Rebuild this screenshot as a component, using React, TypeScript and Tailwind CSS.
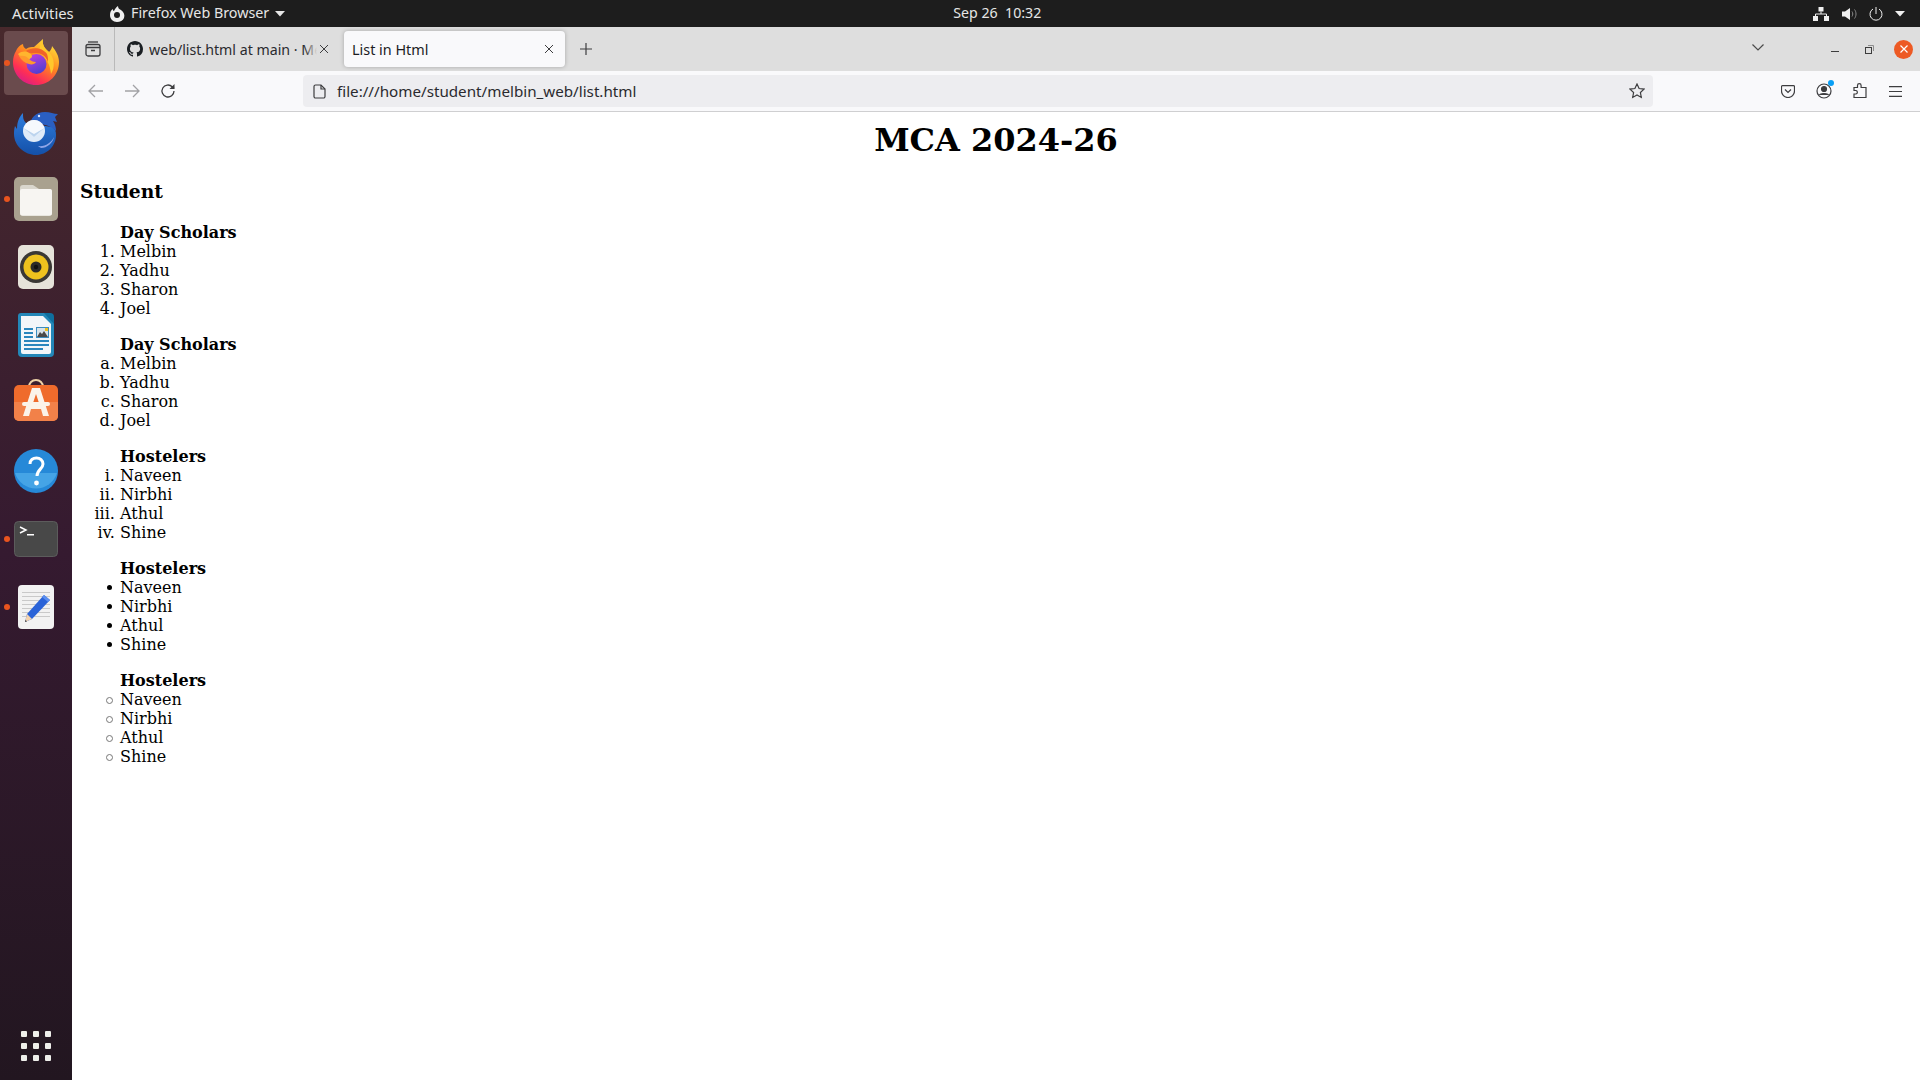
import React from "react";

const UI = { fontFamily: '"Noto Sans", "Open Sans", sans-serif' };
const SERIF = { fontFamily: '"DejaVu Serif", serif' };

function Firefox() {
  return (
    <svg className="mb-[2px]" width="48" height="48" viewBox="0 0 48 48">
      <defs>
        <linearGradient id="ffa" x1="0.8" y1="0.05" x2="0.2" y2="1">
          <stop offset="0" stopColor="#ffe03a" />
          <stop offset="0.4" stopColor="#ff8a1f" />
          <stop offset="0.75" stopColor="#ff2f54" />
          <stop offset="1" stopColor="#d31a8f" />
        </linearGradient>
        <linearGradient id="ffb" x1="0.3" y1="0" x2="0.7" y2="1">
          <stop offset="0" stopColor="#b83ee0" />
          <stop offset="1" stopColor="#4a3fd0" />
        </linearGradient>
      </defs>
      <path d="M31 1c-1 5 1 9 6 13 2-2 3-4 3-6 4 5 7 10 7 16 0 13-10 23-23 23S1 37 1 24c0-4 1-8 3-11 1-3 4-6 7-7 0 2 1 4 3 5 3-2 5-2 8-2 3-3 6-5 9-8z" fill="url(#ffa)" />
      <path d="M31 1c-1 5 1 9 6 13 6 6 6 16 2 22-1-9-4-15-9-19-4-4-2-11 1-16z" fill="#ffc72c" />
      <path d="M14 13c6-4 16-4 21 3 1 3 1 5 1 8-2-6-7-9-12-9-4 0-7 1-10-2z" fill="#f0632a" />
      <circle cx="24.500" cy="26" r="10" fill="url(#ffb)" />
      <path d="M6 16c4-3 8-3 11-1 3 1 4 4 2 5-1 1-2 1-2 2-3-1-5-1-7-3-1 0-3-1-4-3z" fill="#ffb52e" />
      <path d="M7 18c4-1 8 0 10 3 2 2 4 3 7 3-1 2-4 3-7 2-4-1-8-4-10-8z" fill="#ff9a2c" />
    </svg>
  );
}

function Thunderbird() {
  return (
    <svg width="48" height="48" viewBox="0 0 48 48">
      <defs>
        <linearGradient id="tb" x1="0.5" y1="0" x2="0.5" y2="1">
          <stop offset="0" stopColor="#2f7ede" />
          <stop offset="1" stopColor="#1450a8" />
        </linearGradient>
      </defs>
      <path d="M11 6c0 4 0 7 3 10l6 1 20 3c3 2 4 4 4 8 0 11-9 20-20 20S2 39 2 27c0-2 0-5 1-8l2 3c0-7 2-12 6-16z" fill="url(#tb)" />
      <path d="M18 19c0-8 6-14 15-14 5 0 9 2 13 2l-3 3 2 5-4-1c2 3 3 6 3 10-6-6-16-9-26-5z" fill="#2a5fc2" />
      <path d="M26 39c7 1 13-3 16-9-1 6-7 11-13 11z" fill="#8fa6e8" />
      <circle cx="22" cy="24" r="11" fill="#dfebf8" />
      <path d="M11.500 21l10.500 9 10.500-9c-2-5-6-8-10.500-8s-8.500 3-10.500 8z" fill="#f6f9fd" />
      <path d="M11.500 21l10.500 9 10.500-9-10.500 6z" fill="#bcd4ee" />
      <circle cx="27" cy="9" r="1.200" fill="#dce8ff" />
    </svg>
  );
}

function Files() {
  return (
    <svg width="44" height="44" viewBox="0 0 44 44">
      <rect width="44" height="44" rx="5" fill="#a9a18f" />
      <path d="M6 11a3 3 0 013-3h10l6 4h10a3 3 0 013 3v21a3 3 0 01-3 3H9a3 3 0 01-3-3z" fill="#d9d6cd" />
      <path d="M6 14a2 2 0 012-2h28a2 2 0 012 2v22a2.500 2.500 0 01-2.500 2.500H8.500A2.500 2.500 0 016 36z" fill="#f7f5f2" />
    </svg>
  );
}

function Rhythmbox() {
  return (
    <svg width="38" height="46" viewBox="0 0 38 46">
      <rect x="1" y="1" width="36" height="44" rx="5" fill="#e6e3da" />
      <circle cx="19" cy="23" r="16" fill="#3a3835" />
      <circle cx="19" cy="23" r="12.500" fill="#eec21e" />
      <circle cx="19" cy="23" r="5.500" fill="#2c2b28" />
      <circle cx="19" cy="23" r="2.200" fill="#111" />
    </svg>
  );
}

function Writer() {
  return (
    <svg width="38" height="46" viewBox="0 0 38 46">
      <path d="M4 1h24l9 9v31a4 4 0 01-4 4H5a4 4 0 01-4-4V4a3 3 0 013-3z" fill="#2387b8" />
      <path d="M4 4h22l8 8v28a2 2 0 01-2 2H6a2 2 0 01-2-2z" fill="#f2f6f9" />
      <path d="M27 1h6a4 4 0 014 4v7z" fill="#0f6f9e" />
      <rect x="7" y="16" width="9" height="2" fill="#2a86bd" />
      <rect x="7" y="20" width="9" height="2" fill="#2a86bd" />
      <rect x="7" y="24" width="9" height="2" fill="#2a86bd" />
      <rect x="7" y="28" width="25" height="2" fill="#2a86bd" />
      <rect x="7" y="32" width="25" height="2" fill="#2a86bd" />
      <rect x="7" y="36" width="19" height="2" fill="#2a86bd" />
      <rect x="19" y="15" width="13" height="11" fill="#3b8dbf" />
      <rect x="20" y="16" width="11" height="9" fill="#d8e4ea" />
      <path d="M20 25l3-5 2 2 2-3 4 6z" fill="#4a4a4a" />
      <rect x="28" y="16" width="3" height="3" fill="#f2c21e" />
    </svg>
  );
}

function Software() {
  return (
    <svg className="mb-[6px]" width="44" height="42" viewBox="0 0 44 42">
      <path d="M15 8c0-4 3-7 7-7s7 3 7 7" fill="none" stroke="#eed3a8" strokeWidth="2" />
      <rect y="6" width="44" height="36" rx="5" fill="#ef6b2c" />
      <path d="M0 23h44v14a5 5 0 01-5 5H5a5 5 0 01-5-5z" fill="#f28149" />
      <path d="M18 9h8l9 28h-6l-2-7H17l-2 7H9z" fill="#fbf3ea" />
      <path d="M22 15l-3 9h6z" fill="#ef6b2c" />
      <rect x="8" y="23" width="28" height="4" rx="2" fill="#fbf3ea" />
    </svg>
  );
}

function Help() {
  return (
    <svg width="44" height="44" viewBox="0 0 44 44">
      <circle cx="22" cy="22" r="22" fill="#2689d8" />
      <path d="M1 24h42a22 22 0 01-42 0z" fill="#45a4e6" />
      <path d="M16 15c0-4 3-6 6.500-6s6.500 2.500 6.500 6c0 5-6 5.500-6 12" fill="none" stroke="#fff" strokeWidth="3" />
      <circle cx="22.500" cy="34" r="2.400" fill="#fff" />
    </svg>
  );
}

function Terminal() {
  return (
    <svg width="44" height="36" viewBox="0 0 44 36">
      <rect x=".5" y=".5" width="43" height="35" rx="4" fill="#484848" stroke="#5c5c5c" />
      <path d="M6 6l6 3-6 3" fill="none" stroke="#fff" strokeWidth="1.500" />
      <rect x="13" y="13" width="7" height="1.500" fill="#fff" />
    </svg>
  );
}

function Editor() {
  return (
    <svg width="38" height="46" viewBox="0 0 38 46">
      <rect x="1" y="1" width="36" height="44" rx="4" fill="#f2f2f2" />
      {[8, 12, 16, 20, 24, 28, 32].map((y) => (
        <rect key={y} x="5" y={y} width="28" height="1" fill="#c9c9c9" />
      ))}
      <path d="M10 30L27 11l6 5-18 19-7 3z" fill="#2a63d8" />
      <path d="M27 11l6 5-2 2-6-5z" fill="#5b8ff0" />
      <path d="M10 30l5 5-7 3z" fill="#f3d3b0" />
      <path d="M8.500 36l-.5 2 2-.8z" fill="#333" />
    </svg>
  );
}

function DockItem({ running, active, children }: { running?: boolean; active?: boolean; children: React.ReactNode }) {
  return (
    <div className="relative flex h-[68px] items-center justify-center">
      {active && <div className="absolute left-[4px] top-[2px] h-[64px] w-[64px] rounded-[4px] bg-[#6a4b4d]" />}
      {running && <div className="absolute left-[4px] top-[31px] h-[6px] w-[6px] rounded-full bg-[#e9541f]" />}
      <div className="relative flex">{children}</div>
    </div>
  );
}

function Dock() {
  return (
    <div className="flex w-[72px] shrink-0 flex-col bg-linear-to-b from-[#48292c] via-[#351a30] to-[#221620] pt-[2px]">
      <DockItem running active><Firefox /></DockItem>
      <DockItem><Thunderbird /></DockItem>
      <DockItem running><Files /></DockItem>
      <DockItem><Rhythmbox /></DockItem>
      <DockItem><Writer /></DockItem>
      <DockItem><Software /></DockItem>
      <DockItem><Help /></DockItem>
      <DockItem running><Terminal /></DockItem>
      <DockItem running><Editor /></DockItem>
      <div className="mt-auto mb-[19px] grid w-[30px] grid-cols-3 gap-[6px] self-center">
        {Array.from({ length: 9 }).map((_, i) => (
          <div key={i} className="h-[6px] w-[6px] rounded-[1px] bg-[#eeeeea]" />
        ))}
      </div>
    </div>
  );
}

function Caret({ className }: { className: string }) {
  return (
    <svg className={className} width="10" height="6" viewBox="0 0 10 6">
      <path d="M0 0h10L5 5.500z" fill="currentColor" />
    </svg>
  );
}

function TopBar() {
  return (
    <div className="flex h-[27px] shrink-0 items-center bg-[#1d1d1d] text-[14.4px] text-[#e6e6e6]" style={UI}>
      <div className="w-[109px] shrink-0 pb-[1px] pl-[12px] text-[14.8px]">Activities</div>
      <svg className="mr-[6px] shrink-0" width="16" height="16" viewBox="0 0 16 16">
        <path d="M9 0c0 2 1 3 3 4 3 2 4 5 3 8-1 2.500-4 4-7 4-4 0-7-3-7-7 0-3 1-5 3-6 0 1 0 2 1 2 1-2 2-4 4-5z" fill="#efefef" />
        <circle cx="8" cy="9" r="3" fill="#1d1d1d" />
      </svg>
      <span className="whitespace-nowrap pb-[1px] text-[14.3px]">Firefox Web Browser</span>
      <Caret className="ml-[6px] shrink-0" />
      <div className="ml-[652px] w-[120px] shrink-0 whitespace-pre pb-[1px] text-center text-[14.2px]">Sep 26  10:32</div>
      <div className="ml-auto flex items-center pr-[15px] text-[#efefef]">
        <svg className="mr-[13px]" width="16" height="14" viewBox="0 0 16 14">
          <path d="M5.500 0h5v4.500h-5zM0 9h5v5H0zM11 9h5v5h-5z" fill="currentColor" />
          <path d="M8 4.500V7M2.500 9V7h11v2" fill="none" stroke="currentColor" />
        </svg>
        <svg className="mr-[12px]" width="15" height="14" viewBox="0 0 15 14">
          <path d="M0 4.500h3L8 1v12L3 9.500H0z" fill="currentColor" />
          <path d="M10 4.500c1 1.500 1 3.500 0 5M12.500 2.500c2 2.500 2 6.500 0 9" fill="none" stroke="#8a8a8a" />
        </svg>
        <svg className="mr-[12px]" width="14" height="14" viewBox="0 0 14 14">
          <path d="M4 2a6 6 0 106 0" fill="none" stroke="currentColor" />
          <path d="M7 0v7" stroke="currentColor" />
        </svg>
        <Caret className="shrink-0" />
      </div>
    </div>
  );
}

function TabBar() {
  return (
    <div className="flex h-[44px] shrink-0 items-stretch bg-[#dedede] text-[14.4px] text-[#1d1d1f]" style={UI}>
      <div className="flex w-[43px] shrink-0 items-center justify-center border-r border-r-[#b9b9b9]">
        <svg width="16" height="16" viewBox="0 0 16 16" fill="none" stroke="#3d3d3f" strokeWidth="1.300">
          <path d="M3 1h10" />
          <rect x="1" y="3.500" width="14" height="11.500" rx="2" />
          <path d="M1 6.500h14M6 9.500h4" />
        </svg>
      </div>
      <div className="flex w-[203px] shrink-0 items-center pl-[12px]">
        <svg className="mr-[5px] shrink-0" width="16" height="16" viewBox="0 0 16 16">
          <path fill="#1b1f23" d="M8 0C3.580 0 0 3.580 0 8c0 3.540 2.290 6.530 5.470 7.590.4.070.55-.17.55-.38 0-.19-.01-.82-.01-1.490-2.010.37-2.530-.49-2.690-.94-.09-.23-.48-.94-.82-1.130-.28-.15-.68-.52-.01-.53.63-.01 1.080.58 1.230.82.720 1.210 1.870.87 2.330.66.070-.52.280-.87.510-1.070-1.780-.2-3.640-.89-3.640-3.950 0-.87.310-1.590.820-2.150-.08-.2-.36-1.020.08-2.120 0 0 .67-.21 2.200.82.640-.18 1.320-.27 2-.27s1.360.09 2 .27c1.530-1.040 2.200-.82 2.200-.82.440 1.100.16 1.920.08 2.120.51.560.82 1.270.82 2.150 0 3.070-1.870 3.750-3.650 3.950.29.250.54.730.54 1.480 0 1.070-.01 1.930-.01 2.200 0 .21.150.46.550.38A8.010 8.010 0 0016 8c0-4.420-3.580-8-8-8z" />
        </svg>
        <span className="relative ml-[1px] w-[168px] overflow-hidden whitespace-nowrap pt-[2px] text-[14.2px] text-[#2a2a2e]">
          web/list.html at main · Me
          <span className="absolute inset-y-0 right-0 w-[12px] bg-linear-to-r from-transparent to-[#dedede]" />
        </span>
      </div>
      <div className="flex items-center">
        <svg className="ml-[1px] mr-[15px] shrink-0" width="10" height="10" viewBox="0 0 10 10">
          <path d="M1 1l8 8M9 1l-8 8" stroke="#3d3d3f" strokeWidth="1" />
        </svg>
      </div>
      <div className="my-[4px] flex w-[221px] shrink-0 items-center justify-between rounded-[4px] bg-[#f9f9fb] pl-[8px] pr-[11px] shadow-[0_0_4px_rgba(0,0,0,0.25)]">
        <span className="pt-[2px]">List in Html</span>
        <svg width="10" height="10" viewBox="0 0 10 10">
          <path d="M1 1l8 8M9 1l-8 8" stroke="#3d3d3f" strokeWidth="1" />
        </svg>
      </div>
      <div className="flex w-[42px] shrink-0 items-center justify-center">
        <svg width="12" height="12" viewBox="0 0 12 12">
          <path d="M6 0v12M0 6h12" stroke="#3d3d3f" strokeWidth="1.200" />
        </svg>
      </div>
      <div className="ml-auto flex items-center">
        <svg className="mb-[4px] mr-[67px]" width="12" height="7" viewBox="0 0 12 7" fill="none">
          <path d="M.5.500L6 6 11.500.500" stroke="#4a4a4a" strokeWidth="1.200" />
        </svg>
        <div className="mr-[26px] mt-[4px] h-[1px] w-[8px] bg-[#3d3d3d]" />
        <svg className="mr-[20px]" width="9" height="9" viewBox="0 0 9 9" fill="none">
          <rect x=".5" y="2.500" width="6" height="6" stroke="#3d3d3d" />
          <path d="M3 .500h5.500V6" stroke="#8d8d8d" />
        </svg>
        <div className="mr-[7px] flex h-[19px] w-[19px] items-center justify-center rounded-full bg-[#ed5a24]">
          <svg width="8" height="8" viewBox="0 0 8 8">
            <path d="M.5.500l7 7M7.500.500l-7 7" stroke="#fff" strokeWidth="1.200" />
          </svg>
        </div>
      </div>
    </div>
  );
}

function Toolbar() {
  return (
    <div className="flex h-[41px] shrink-0 items-start border-b border-b-[#cfcfd1] bg-[#f9f9fb] pt-[4px]" style={UI}>
      <div className="flex h-[32px] w-[231px] shrink-0 items-center pl-[16px]">
        <svg className="mr-[20px]" width="16" height="14" viewBox="0 0 16 14" fill="none" stroke="#a2a2a5" strokeWidth="1.300">
          <path d="M15 7H1.500M7 1L1 7l6 6" />
        </svg>
        <svg className="mr-[20px]" width="16" height="14" viewBox="0 0 16 14" fill="none" stroke="#a2a2a5" strokeWidth="1.300">
          <path d="M1 7h13.500M9 1l6 6-6 6" />
        </svg>
        <svg width="16" height="16" viewBox="0 0 16 16" fill="none" stroke="#3d3d3f" strokeWidth="1.300">
          <path d="M14 8a6 6 0 11-1.800-4.300L14 5.500" />
          <path d="M14.500 1v5h-5" fill="#3d3d3f" stroke="none" />
        </svg>
      </div>
      <div className="flex h-[32px] w-[1350px] shrink-0 items-center rounded-[4px] bg-[#ededf0] pl-[10px] pr-[8px]">
        <svg className="mr-[11px] shrink-0" width="13" height="15" viewBox="0 0 13 15" fill="none" stroke="#3d3d3f" strokeWidth="1.200">
          <path d="M1 2.500A1.500 1.500 0 012.500 1H8l4 4v7.500a1.500 1.500 0 01-1.500 1.500h-8A1.500 1.500 0 011 12.500z" />
          <path d="M8 1v4h4" />
        </svg>
        <span className="text-[15.2px] text-[#2a2a2e]">file:///home/student/melbin_web/list.html</span>
        <svg className="ml-auto" width="16" height="16" viewBox="0 0 16 16" fill="none" stroke="#3d3d3f" strokeWidth="1.200">
          <path d="M8 1l2.100 4.500 4.900.6-3.600 3.400.9 4.900L8 12l-4.300 2.400.9-4.900L1 6.100l4.900-.6z" />
        </svg>
      </div>
      <div className="flex h-[32px] flex-1 items-center">
        <svg className="ml-[128px]" width="14" height="13" viewBox="0 0 14 13" fill="none" stroke="#3d3d3f" strokeWidth="1.200">
          <path d="M1.500.6h11a1 1 0 011 1V6a6.500 6.500 0 01-13 0V1.600a1 1 0 011-1z" />
          <path d="M4 4.500l3 3 3-3" />
        </svg>
        <div className="relative ml-[21px] flex">
          <svg width="16" height="16" viewBox="0 0 16 16" fill="none" stroke="#3d3d3f" strokeWidth="1.200">
            <circle cx="8" cy="8" r="7" />
            <circle cx="8" cy="6" r="2.500" fill="#3d3d3f" />
            <path d="M3.500 12c1-2 8-2 9 0" fill="#3d3d3f" />
          </svg>
          <div className="absolute -right-[2px] -top-[3px] h-[6px] w-[6px] rounded-full bg-[#0a9ff5]" />
        </div>
        <svg className="ml-[21px]" width="14" height="16" viewBox="0 0 14 16" fill="none" stroke="#3d3d3f" strokeWidth="1.200">
          <path d="M1 4.500h3.500V2.500a1.800 1.800 0 013.600 0v2H13v10H1v-3.500h2a1.800 1.800 0 000-3.500H1z" />
        </svg>
        <svg className="ml-[22px]" width="13" height="11" viewBox="0 0 13 11">
          <path d="M0 .6h13M0 5.500h13M0 10.400h13" stroke="#3d3d3f" strokeWidth="1.200" />
        </svg>
      </div>
    </div>
  );
}

function List({ title, items, type, bullet }: { title: string; items: string[]; type?: string; bullet?: React.ReactNode }) {
  return (
    <div className="mb-[17px]">
      <div className="pl-[40px] font-bold">{title}</div>
      <ul className={`pl-[40px] ${type ?? "list-none"}`}>
        {items.map((t) => (
          <li key={t} className="relative">
            {bullet}
            {t}
          </li>
        ))}
      </ul>
    </div>
  );
}

const scholars = ["Melbin", "Yadhu", "Sharon", "Joel"];
const hostelers = ["Naveen", "Nirbhi", "Athul", "Shine"];

function Page() {
  return (
    <div className="flex-1 bg-white px-[8px] pt-[9px] text-[16px] leading-[19px] text-black" style={SERIF}>
      <h1 className="text-center text-[32px] font-bold leading-[38px]">MCA 2024-26</h1>
      <h3 className="mt-[21px] mb-[21px] text-[18.72px] font-bold leading-[22px]">Student</h3>
      <List title="Day Scholars" items={scholars} type="list-decimal" />
      <List title="Day Scholars" items={scholars} type="list-[lower-alpha]" />
      <List title="Hostelers" items={hostelers} type="list-[lower-roman]" />
      <List
        title="Hostelers"
        items={hostelers}
        bullet={<span className="absolute -left-[13px] top-[7px] h-[5px] w-[5px] rounded-full bg-black" />}
      />
      <List
        title="Hostelers"
        items={hostelers}
        bullet={<span className="absolute -left-[14px] top-[7px] h-[7px] w-[7px] rounded-full border border-[#777777]" />}
      />
    </div>
  );
}

export default function App() {
  return (
    <div className="flex h-[1080px] w-[1920px] flex-col overflow-hidden">
      <TopBar />
      <div className="flex min-h-0 flex-1">
        <Dock />
        <div className="flex min-w-0 flex-1 flex-col">
          <TabBar />
          <Toolbar />
          <Page />
        </div>
      </div>
    </div>
  );
}
